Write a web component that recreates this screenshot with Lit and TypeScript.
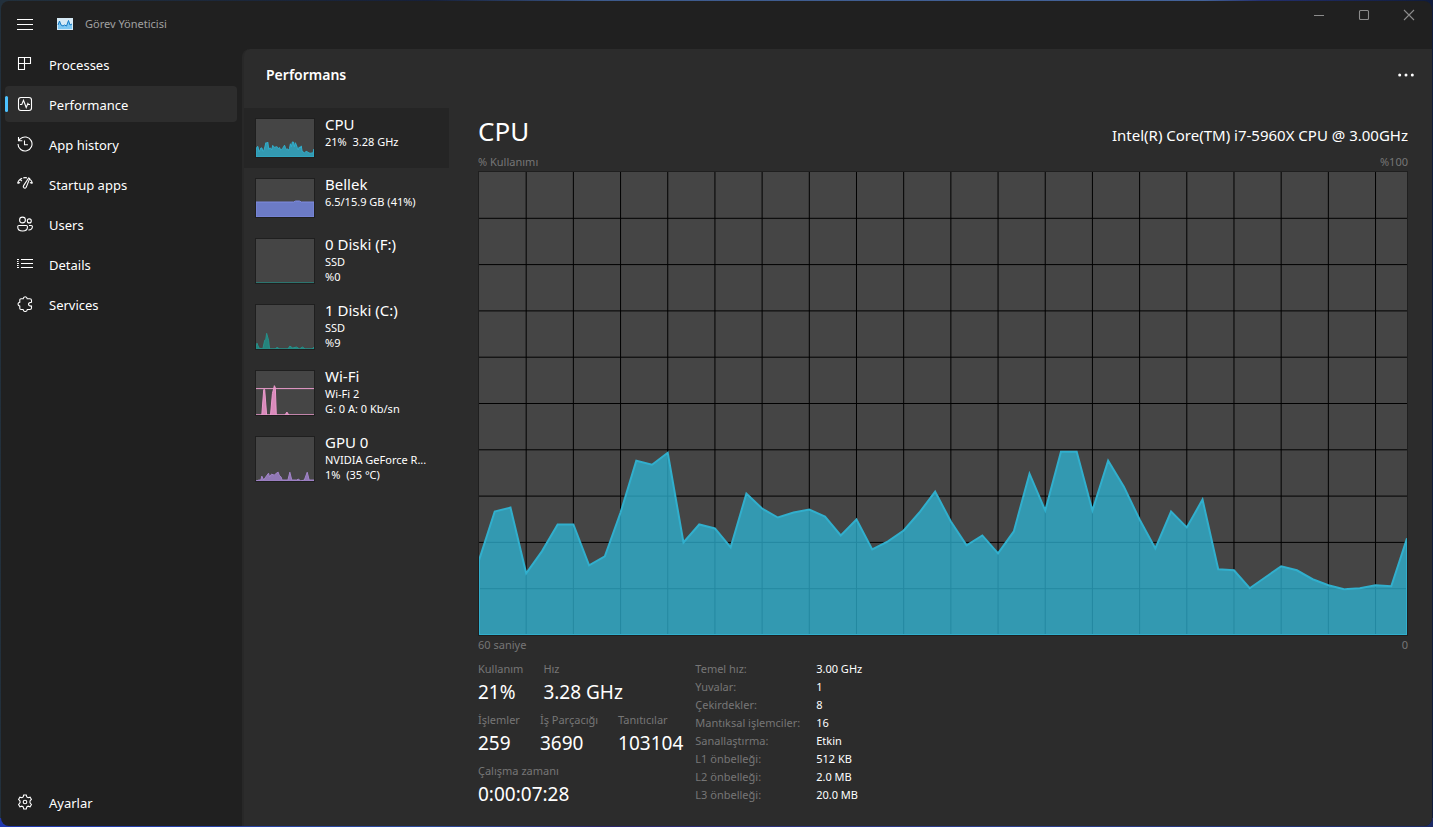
import { LitElement, html, css, svg } from "lit";
import { customElement, property, state } from "lit/decorators.js";

const CPU_LOAD = [
  75, 124, 128, 62, 84, 111, 111, 70, 79, 123, 175, 171, 183, 93, 111, 107, 88, 142, 127, 118,
  123, 126, 119, 100, 116, 86, 94, 105, 123, 144, 114, 90, 100, 82, 104, 162, 125, 184, 184, 125,
  175, 149, 116, 87, 124, 108, 136, 66, 65, 47, 58, 69, 65, 56, 50, 46, 47, 50, 49, 97,
].map((v) => v / 465);

type Series = { color: string; fill: string; points: [number, number][]; line?: number };

type Resource = {
  name: string;
  lines: string[];
  series: Series;
};

const cpuSeries: Series = {
  color: "#31afcd",
  fill: "#3399b1",
  points: CPU_LOAD.map((v, i) => [i / 59, v]),
};

const px = (pairs: number[][], h: number): [number, number][] =>
  pairs.map(([x, y]) => [x / 60, y / h]);

const RESOURCES: Resource[] = [
  { name: "CPU", lines: ["21%  3.28 GHz"], series: cpuSeries },
  {
    name: "Bellek",
    lines: ["6.5/15.9 GB (41%)"],
    series: {
      color: "#7f8be0",
      fill: "#6c7bc6",
      points: px([[0, 15], [39, 15], [41, 16], [45, 16], [47, 15], [60, 15]], 38),
    },
  },
  {
    name: "0 Diski (F:)",
    lines: ["SSD", "%0"],
    series: { color: "#25837c", fill: "#25837c", points: px([[0, 0], [60, 0]], 45) },
  },
  {
    name: "1 Diski (C:)",
    lines: ["SSD", "%9"],
    series: {
      color: "#25918b",
      fill: "#25837c",
      points: px(
        [[0, 1], [1, 6], [3, 1], [7, 0], [9, 9], [10, 9], [11, 16], [13, 9], [14, 0], [20, 0], [22, 2], [24, 0],
          [33, 0], [35, 3], [38, 1], [42, 2], [45, 0], [48, 2], [51, 0], [58, 0], [60, 2]],
        45
      ),
    },
  },
  {
    name: "Wi-Fi",
    lines: ["Wi-Fi 2", "G: 0 A: 0 Kb/sn"],
    series: {
      color: "#eb9ccd",
      fill: "#d98abb",
      line: 18 / 45,
      points: px(
        [[0, 0], [6, 0], [8, 26], [9, 26], [11, 0], [15, 0], [17, 22], [19, 30], [20, 28], [21, 0], [30, 0],
          [32, 3], [34, 0], [60, 0]],
        45
      ),
    },
  },
  {
    name: "GPU 0",
    lines: ["NVIDIA GeForce R...", "1%  (35 °C)"],
    series: {
      color: "#a385cb",
      fill: "#9179b5",
      points: px(
        [[0, 0], [3, 1], [5, 1], [6, 5], [8, 1], [10, 4], [13, 8], [14, 4], [16, 7], [19, 6], [21, 8], [23, 9],
          [24, 6], [26, 4], [27, 1], [33, 1], [35, 9], [37, 1], [42, 1], [44, 2], [46, 0], [50, 1], [53, 9],
          [55, 1], [60, 1]],
        45
      ),
    },
  },
];

const icons = {
  menu: svg`<path d="M0 3.500h16M0 8.500h16M0 13.500h16"/>`,
  processes: svg`<path d="M1.500 1.500h12v6h-6v6h-6zM7.500 1.500v6M1.500 7.500h6"/>`,
  performance: svg`<rect x="1.500" y="1.500" width="13" height="13" rx="2.500"/><path d="M3 8.500h1.800l1.700-4.200 2.700 7.200 1.700-4 .6 1H13"/>`,
  history: svg`<path d="M1 8a7 7 0 1 0 2.200-5.100L1.600 4.500M1.500 1v3.700h3.800M7.500 4.500v4.200h3.400"/>`,
  startup: svg`<path d="M.6 7.400C1.300 4.600 3 2.900 5.200 2.200M.6 7.400l2.500-.9M6.300 1.900c1.200-.3 2.400-.3 3.600 0M15.400 7.400c-.4-1.800-1.200-3.100-2.300-4M15.400 7.400l-2.500-.9M11.600 2 6.600 9.600c-1.200 2 1.200 3.600 2.600 1.600l3.500-8.600zM3.200 3.400l1.700 1.800"/>`,
  users: svg`<circle cx="5.500" cy="4" r="2.900"/><circle cx="12.300" cy="4.900" r="2"/><path d="M2 9.500h7.200c.8 0 1.300.5 1.300 1.200 0 2.600-2 4.300-4.900 4.300S.7 13.300.7 10.700c0-.7.500-1.200 1.300-1.200zM12 9.500h2.200c.7 0 1.200.4 1.200 1.100 0 2-1.500 3.600-4 3.400"/>`,
  details: svg`<path d="M4 3.500h12M4 7.500h12M4 11.500h12M0 3.500h2M0 7.500h2M0 11.500h2M0 5.500h1.500M0 9.500h1.500"/>`,
  services: svg`<path d="M4 2.800h2.200C6.300 1.300 7 .7 8.200.7s1.900.6 2 2.100h2.600c.9 0 1.700.5 1.700 1.400v2.100c-2 .1-3 .8-3 1.900s1 1.800 3 1.900v2c0 .9-.8 1.400-1.700 1.400h-2.500c-.2 1.500-.9 2-2.100 2s-1.900-.5-2.100-2H4c-.7 0-1.200-.5-1.200-1.200v-2.200C1.500 9.800 1 9.200 1 8.100s.5-1.700 1.800-1.900V4c0-.7.500-1.200 1.200-1.200z"/>`,
  settings: svg`<circle cx="8" cy="8" r="1.800"/><path d="M6.700 1h2.600l.5 2 1.300.7 2-.6 1.300 2.300-1.400 1.500v2l1.400 1.600-1.300 2.300-2-.6-1.300.7-.5 2.100H6.700l-.5-2.100-1.300-.7-2 .6-1.300-2.300L3 8.900v-2L1.600 5.400l1.300-2.300 2 .6L6.200 3z"/>`,
  minimize: svg`<path d="M3 8.500h10"/>`,
  maximize: svg`<rect x="3.500" y="3.500" width="9" height="9" rx="1"/>`,
  close: svg`<path d="M3 3l10 10M13 3 3 13"/>`,
  more: svg`<g fill="currentColor" stroke="none"><circle cx="1.700" cy="8" r="1.500"/><circle cx="8" cy="8" r="1.500"/><circle cx="14.300" cy="8" r="1.500"/></g>`,
};

const icon = (name: keyof typeof icons) =>
  html`<svg class="icon" viewBox="0 0 16 16" width="16" height="16" aria-hidden="true">${icons[name]}</svg>`;

@customElement("usage-chart")
class UsageChart extends LitElement {
  @property({ attribute: false }) series: Series = cpuSeries;
  @property({ type: Boolean }) grid = false;

  static styles = css`
    :host {
      display: block;
      position: relative;
      box-sizing: border-box;
      background: #454545;
      border: 1px solid #1f1f1f;
      overflow: hidden;
    }
    svg {
      position: absolute;
      inset: 0;
      width: 100%;
      height: 100%;
      display: block;
    }
    .grid {
      stroke: #000;
      shape-rendering: crispEdges;
    }
    .over {
      stroke: #2488a0;
    }
    path,
    line {
      vector-effect: non-scaling-stroke;
    }
  `;

  render() {
    const { points, color, fill, line } = this.series;
    const top = points.map(([x, y]) => `${x * 1000} ${(1 - y) * 1000}`).join("L");
    const area = `M0 1000L${top}L1000 1000Z`;
    const cols = Array.from({ length: 19 }, (_, i) => `M${((i + 1) * 3000) / 59} 0V1000`).join("");
    const rows = Array.from({ length: 9 }, (_, i) => `M0 ${(i + 1) * 100}H1000`).join("");
    return html`<svg viewBox="0 0 1000 1000" preserveAspectRatio="none" aria-hidden="true">
      ${this.grid ? svg`<path class="grid" d=${cols + rows} />` : null}
      <path d=${area} fill=${fill} />
      ${this.grid
        ? svg`<clipPath id="area"><path d=${area} /></clipPath>
            <g clip-path="url(#area)"><path class="grid over" d=${cols + rows} /></g>`
        : null}
      <path d=${area} fill="none" stroke=${color} stroke-width=${this.grid ? 2 : 1} />
      ${line ? svg`<line x1="0" x2="1000" y1=${line * 1000} y2=${line * 1000} stroke=${color} />` : null}
    </svg>`;
  }
}

@customElement("app-root")
class AppRoot extends LitElement {
  @state() private page = "Performance";
  @state() private resource = "CPU";

  static styles = css`
    :host {
      display: block;
      box-sizing: border-box;
      height: 100vh;
      min-height: 640px;
      padding: 1px;
      background:
        linear-gradient(90deg, #2038b0, #2c4a9a 30%, #2a2468 42%, #2c3f8f 70%, #1c2a66) bottom / 100% 9px no-repeat,
        linear-gradient(90deg, #22303c, #16203a 30%, #3d5a8c 42%, #44639a 84%, #232f6e 88%, #101c3c);
      font-family: "Noto Sans", "Open Sans", sans-serif;
      font-size: 13px;
      color: #fff;
    }
    * {
      box-sizing: border-box;
    }
    button {
      font: inherit;
      color: inherit;
      background: none;
      border: 0;
      padding: 0;
      text-align: left;
    }
    h1,
    h2,
    dl,
    dd,
    p {
      margin: 0;
      font-weight: 400;
    }
    .icon {
      flex: none;
      display: block;
      fill: none;
      stroke: currentColor;
      stroke-width: 1.1;
    }
    .window {
      height: 100%;
      display: flex;
      flex-direction: column;
      background: #202020;
      border-radius: 8px;
      overflow: hidden;
    }
    .titlebar {
      flex: none;
      height: 45px;
      display: flex;
      align-items: center;
      padding: 0 1px 0 16px;
    }
    .logo {
      margin: 0 12px 0 24px;
    }
    .title {
      flex: 1;
      font-size: 11px;
      color: #a0a0a0;
    }
    .caption {
      align-self: flex-start;
      display: flex;
      color: #8c8c8c;
    }
    .caption button {
      width: 45px;
      height: 28px;
      display: grid;
      place-items: center;
    }
    .body {
      flex: 1;
      min-height: 0;
      display: flex;
    }
    .sidebar {
      flex: none;
      width: 241px;
      padding: 0 5px 6px 4px;
      display: flex;
      flex-direction: column;
      gap: 4px;
    }
    .nav {
      height: 36px;
      flex: none;
      display: flex;
      align-items: center;
      gap: 16px;
      padding: 0 12px;
      border-radius: 4px;
      position: relative;
    }
    .nav span {
      padding-top: 2px;
    }
    .nav.active {
      background: #2d2d2d;
    }
    .nav.active::before {
      content: "";
      position: absolute;
      left: 0;
      top: 10px;
      width: 3px;
      height: 16px;
      border-radius: 2px;
      background: #4cc2ff;
    }
    .nav.bottom {
      margin-top: auto;
    }
    .content {
      flex: 1;
      min-width: 0;
      margin-top: 3px;
      display: flex;
      flex-direction: column;
      background: #2c2c2c;
      border-left: 2px solid #282828;
      border-top-left-radius: 8px;
    }
    .toolbar {
      flex: none;
      height: 59px;
      padding: 0 18px 8px 22px;
      display: flex;
      align-items: center;
      justify-content: space-between;
    }
    .toolbar h1 {
      font-size: 14px;
      font-weight: 600;
    }
    .split {
      flex: 1;
      min-height: 0;
      display: flex;
    }
    .resources {
      flex: none;
      width: 205px;
      margin-right: 29px;
      display: flex;
      flex-direction: column;
      align-items: stretch;
    }
    .resource {
      display: flex;
      align-items: flex-start;
      gap: 10px;
      padding: 7px 12px 10px 11px;
      min-height: 60px;
    }
    .resource.active {
      background: #252525;
    }
    .thumb {
      flex: none;
      width: 60px;
      height: 40px;
      margin-top: 3px;
    }
    .thumb.tall {
      height: 46px;
    }
    .info {
      display: flex;
      flex-direction: column;
      font-size: 11px;
      line-height: 15px;
      white-space: pre;
    }
    .info .name {
      font-size: 15px;
      line-height: 19px;
    }
    .main {
      flex: 1;
      min-width: 0;
      padding: 4px 24px 18px 0;
      display: flex;
      flex-direction: column;
    }
    .heading {
      display: flex;
      align-items: baseline;
      justify-content: space-between;
      line-height: 36px;
    }
    .heading h2 {
      font-size: 26px;
      line-height: 38px;
    }
    .heading p {
      font-size: 15px;
    }
    .axis {
      display: flex;
      justify-content: space-between;
      font-size: 11px;
      line-height: 18px;
      color: #767676;
    }
    .graph {
      flex: 1;
      min-height: 120px;
    }
    .stats {
      display: flex;
      gap: 12px;
      margin-top: 6px;
      font-size: 11px;
      line-height: 18px;
    }
    .figures {
      display: flex;
      flex-direction: column;
      gap: 5px;
    }
    .figures dl {
      display: flex;
      gap: 20px;
    }
    dt,
    th {
      color: #767676;
      font-weight: 400;
      text-align: left;
    }
    dd {
      font-size: 19px;
      line-height: 28px;
    }
    table {
      border-collapse: collapse;
      align-self: flex-start;
    }
    th,
    td {
      padding: 0 16px 0 0;
    }
  `;

  private figure(label: string, value: string) {
    return html`<div><dt>${label}</dt><dd>${value}</dd></div>`;
  }

  private navItem(label: string, name: keyof typeof icons, extra = "") {
    const active = this.page === label;
    return html`<button
      class="nav ${active ? "active" : ""} ${extra}"
      aria-current=${active ? "page" : "false"}
      @click=${() => (this.page = label)}
    >${icon(name)}<span>${label}</span></button>`;
  }

  render() {
    const specs = [
      ["Temel hız:", "3.00 GHz"],
      ["Yuvalar:", "1"],
      ["Çekirdekler:", "8"],
      ["Mantıksal işlemciler:", "16"],
      ["Sanallaştırma:", "Etkin"],
      ["L1 önbelleği:", "512 KB"],
      ["L2 önbelleği:", "2.0 MB"],
      ["L3 önbelleği:", "20.0 MB"],
    ];
    return html`<div class="window">
      <header class="titlebar">
        <button aria-label="Menü">${icon("menu")}</button>
        <svg class="logo" width="16" height="12" viewBox="0 0 16 12" aria-hidden="true">
          <rect width="16" height="12" fill="#d5e9f5" />
          <path d="M1 11V7l1.500-4L4 7l2 1 1.500-1 2 1 2-5.500L13 7l2-1v5z" fill="#7cc6f2" />
          <path d="M1 7l1.500-4L4 7l2 1 1.500-1 2 1 2-5.500L13 7l2-1" fill="none" stroke="#1379c4" />
        </svg>
        <span class="title">Görev Yöneticisi</span>
        <div class="caption">
          <button aria-label="Simge durumuna küçült">${icon("minimize")}</button>
          <button aria-label="Ekranı kapla">${icon("maximize")}</button>
          <button aria-label="Kapat">${icon("close")}</button>
        </div>
      </header>
      <div class="body">
        <nav class="sidebar">
          ${this.navItem("Processes", "processes")} ${this.navItem("Performance", "performance")}
          ${this.navItem("App history", "history")} ${this.navItem("Startup apps", "startup")}
          ${this.navItem("Users", "users")} ${this.navItem("Details", "details")}
          ${this.navItem("Services", "services")} ${this.navItem("Ayarlar", "settings", "bottom")}
        </nav>
        <section class="content">
          <div class="toolbar">
            <h1>Performans</h1>
            <button aria-label="Diğer seçenekler">${icon("more")}</button>
          </div>
          <div class="split">
            <div class="resources">
              ${RESOURCES.map(
                (r) => html`<button
                  class="resource ${r.name === this.resource ? "active" : ""}"
                  @click=${() => (this.resource = r.name)}
                >
                  <usage-chart class="thumb ${r.lines.length > 1 ? "tall" : ""}" .series=${r.series}></usage-chart>
                  <span class="info"><span class="name">${r.name}</span>${r.lines.map((l) => html`<span>${l}</span>`)}</span>
                </button>`
              )}
            </div>
            <main class="main">
              <div class="heading">
                <h2>CPU</h2>
                <p>Intel(R) Core(TM) i7-5960X CPU @ 3.00GHz</p>
              </div>
              <div class="axis"><span>% Kullanımı</span><span>%100</span></div>
              <usage-chart class="graph" grid .series=${cpuSeries}></usage-chart>
              <div class="axis"><span>60 saniye</span><span>0</span></div>
              <div class="stats">
                <div class="figures">
                  <dl>${this.figure("Kullanım", "21%")}${this.figure("Hız", "3.28 GHz")}</dl>
                  <dl>
                    ${this.figure("İşlemler", "259")}${this.figure("İş Parçacığı", "3690")}${this.figure("Tanıtıcılar", "103104")}
                  </dl>
                  <dl>${this.figure("Çalışma zamanı", "0:00:07:28")}</dl>
                </div>
                <table>
                  ${specs.map(([k, v]) => html`<tr><th scope="row">${k}</th><td>${v}</td></tr>`)}
                </table>
              </div>
            </main>
          </div>
        </section>
      </div>
    </div>`;
  }
}
